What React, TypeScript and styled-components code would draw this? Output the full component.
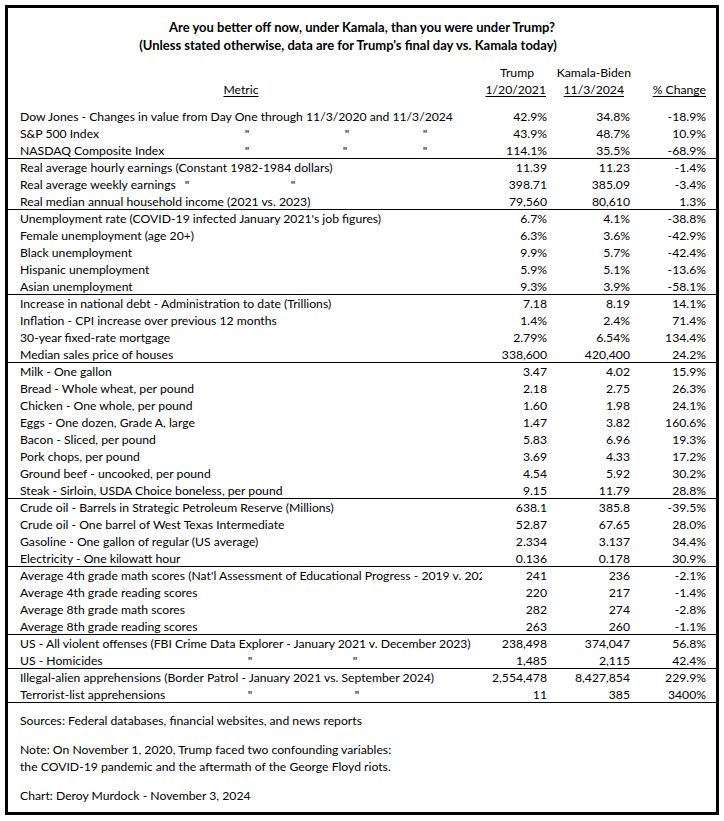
import React from "react";
import styled, { createGlobalStyle } from "styled-components";

const GlobalStyle = createGlobalStyle`
  html, body { margin: 0; padding: 0; background: #ffffff; }
  body { font-family: Lato, "Open Sans", Arial, sans-serif; color: #000; }
`;

const Frame = styled.div`
  box-sizing: border-box;
  margin: 5px;
  width: 714px;
  height: 810px;
  border: 3px solid #000;
  background: #fff;
  overflow: hidden;
  font-size: 12.2px;
  color: #000;
`;

const Title = styled.div`
  padding-top: 10px;
  text-align: center;
  font-weight: 700;
  font-size: 13px;
  line-height: 18px;
`;

const TitleLine = styled.div<{ $shift?: number }>`
  padding-right: ${(p) => (p.$shift ? `${p.$shift}px` : "0")};
`;

const Grid = styled.div`
  display: grid;
  grid-template-columns: 474px 69px 83px 82px;
`;

const HeadGrid = styled(Grid)`
  margin-top: 10px;
  margin-bottom: 10px;
`;

const HeadCell = styled.div<{ $pr: number; $align?: string; $u?: boolean }>`
  height: 17px;
  line-height: 17px;
  text-align: ${(p) => p.$align || "right"};
  padding-right: ${(p) => p.$pr}px;
  text-decoration: ${(p) => (p.$u ? "underline" : "none")};
  text-underline-offset: 2px;
  white-space: nowrap;
`;

const Row = styled(Grid)<{ $last?: boolean }>`
  box-sizing: border-box;
  height: 17px;
  line-height: 17px;
  border-bottom: ${(p) => (p.$last ? "1px solid #000" : "0")};
`;

const MetricCell = styled.div<{ $cols?: string }>`
  padding-left: 12px;
  overflow: hidden;
  white-space: nowrap;
  display: ${(p) => (p.$cols ? "grid" : "block")};
  grid-template-columns: ${(p) => p.$cols || "none"};
`;

const Ditto = styled.span`
  text-align: center;
`;

const Value = styled.div<{ $pr: number }>`
  text-align: right;
  padding-right: ${(p) => p.$pr}px;
  white-space: nowrap;
`;

const Footer = styled.div`
  padding: 9px 0 0 12px;
  line-height: 17px;
`;

const Para = styled.p<{ $gap: number }>`
  margin: ${(p) => p.$gap}px 0 0 0;
`;

type R = { m: string; t: string; k: string; c: string; d?: number[] };

const groups: R[][] = [
  [
    { m: "Dow Jones - Changes in value from Day One through 11/3/2020 and 11/3/2024", t: "42.9%", k: "34.8%", c: "-18.9%" },
    { m: "S&P 500 Index", t: "43.9%", k: "48.7%", c: "10.9%", d: [247, 347, 425] },
    { m: "NASDAQ Composite Index", t: "114.1%", k: "35.5%", c: "-68.9%", d: [247, 345, 425] },
  ],
  [
    { m: "Real average hourly earnings (Constant 1982-1984 dollars)", t: "11.39", k: "11.23", c: "-1.4%" },
    { m: "Real average weekly earnings", t: "398.71", k: "385.09", c: "-3.4%", d: [187, 293] },
    { m: "Real median annual household income (2021 vs. 2023)", t: "79,560", k: "80,610", c: "1.3%" },
  ],
  [
    { m: "Unemployment rate (COVID-19 infected January 2021's job figures)", t: "6.7%", k: "4.1%", c: "-38.8%" },
    { m: "Female unemployment (age 20+)", t: "6.3%", k: "3.6%", c: "-42.9%" },
    { m: "Black unemployment", t: "9.9%", k: "5.7%", c: "-42.4%" },
    { m: "Hispanic unemployment", t: "5.9%", k: "5.1%", c: "-13.6%" },
    { m: "Asian unemployment", t: "9.3%", k: "3.9%", c: "-58.1%" },
  ],
  [
    { m: "Increase in national debt - Administration to date (Trillions)", t: "7.18", k: "8.19", c: "14.1%" },
    { m: "Inflation - CPI increase over previous 12 months", t: "1.4%", k: "2.4%", c: "71.4%" },
    { m: "30-year fixed-rate mortgage", t: "2.79%", k: "6.54%", c: "134.4%" },
    { m: "Median sales price of houses", t: "338,600", k: "420,400", c: "24.2%" },
  ],
  [
    { m: "Milk - One gallon", t: "3.47", k: "4.02", c: "15.9%" },
    { m: "Bread - Whole wheat, per pound", t: "2.18", k: "2.75", c: "26.3%" },
    { m: "Chicken - One whole, per pound", t: "1.60", k: "1.98", c: "24.1%" },
    { m: "Eggs - One dozen, Grade A, large", t: "1.47", k: "3.82", c: "160.6%" },
    { m: "Bacon - Sliced, per pound", t: "5.83", k: "6.96", c: "19.3%" },
    { m: "Pork chops, per pound", t: "3.69", k: "4.33", c: "17.2%" },
    { m: "Ground beef - uncooked, per pound", t: "4.54", k: "5.92", c: "30.2%" },
    { m: "Steak - Sirloin, USDA Choice boneless, per pound", t: "9.15", k: "11.79", c: "28.8%" },
  ],
  [
    { m: "Crude oil - Barrels in Strategic Petroleum Reserve (Millions)", t: "638.1", k: "385.8", c: "-39.5%" },
    { m: "Crude oil - One barrel of West Texas Intermediate", t: "52.87", k: "67.65", c: "28.0%" },
    { m: "Gasoline - One gallon of regular (US average)", t: "2.334", k: "3.137", c: "34.4%" },
    { m: "Electricity - One kilowatt hour", t: "0.136", k: "0.178", c: "30.9%" },
  ],
  [
    { m: "Average 4th grade math scores (Nat'l Assessment of Educational Progress - 2019 v. 2022)", t: "241", k: "236", c: "-2.1%" },
    { m: "Average 4th grade reading scores", t: "220", k: "217", c: "-1.4%" },
    { m: "Average 8th grade math scores", t: "282", k: "274", c: "-2.8%" },
    { m: "Average 8th grade reading scores", t: "263", k: "260", c: "-1.1%" },
  ],
  [
    { m: "US - All violent offenses (FBI Crime Data Explorer - January 2021 v. December 2023)", t: "238,498", k: "374,047", c: "56.8%" },
    { m: "US - Homicides", t: "1,485", k: "2,115", c: "42.4%", d: [250, 355] },
  ],
  [
    { m: "Illegal-alien apprehensions (Border Patrol - January 2021 vs. September 2024)", t: "2,554,478", k: "8,427,854", c: "229.9%" },
    { m: "Terrorist-list apprehensions", t: "11", k: "385", c: "3400%", d: [250, 357] },
  ],
];

// metric content starts at page x = 20; each ditto cell is 20px wide, centred on the given x
function dittoCols(d: number[]): string {
  const cols: string[] = [];
  let prev = 20;
  d.forEach((x) => {
    cols.push(`${x - 10 - prev}px`);
    cols.push("20px");
    prev = x + 10;
  });
  return cols.join(" ");
}

function Metric({ r }: { r: R }) {
  if (!r.d) return <MetricCell>{r.m}</MetricCell>;
  const items: React.ReactNode[] = [];
  r.d.forEach((_, i) => {
    items.push(i === 0 ? <span key={`l${i}`}>{r.m}</span> : <span key={`s${i}`} />);
    items.push(<Ditto key={`d${i}`}>"</Ditto>);
  });
  return <MetricCell $cols={dittoCols(r.d)}>{items}</MetricCell>;
}

export default function App() {
  return (
    <>
      <GlobalStyle />
      <Frame>
        <Title>
          <TitleLine>Are you better off now, under Kamala, than you were under Trump?</TitleLine>
          <TitleLine $shift={28}>(Unless stated otherwise, data are for Trump's final day vs. Kamala today)</TitleLine>
        </Title>
        <HeadGrid>
          <HeadCell $pr={0} />
          <HeadCell $pr={17}>Trump</HeadCell>
          <HeadCell $pr={3}>Kamala-Biden</HeadCell>
          <HeadCell $pr={10} />
          <HeadCell $pr={8} $align="center" $u>Metric</HeadCell>
          <HeadCell $pr={5} $u>1/20/2021</HeadCell>
          <HeadCell $pr={10} $u>11/3/2024</HeadCell>
          <HeadCell $pr={10} $u>% Change</HeadCell>
        </HeadGrid>
        {groups.map((g, gi) =>
          g.map((r, ri) => (
            <Row key={`${gi}-${ri}`} $last={ri === g.length - 1}>
              <Metric r={r} />
              <Value $pr={4}>{r.t}</Value>
              <Value $pr={4}>{r.k}</Value>
              <Value $pr={10}>{r.c}</Value>
            </Row>
          ))
        )}
        <Footer>
          <Para $gap={0}>Sources: Federal databases, financial websites, and news reports</Para>
          <Para $gap={12}>
            Note: On November 1, 2020, Trump faced two confounding variables:
            <br />
            the COVID-19 pandemic and the aftermath of the George Floyd riots.
          </Para>
          <Para $gap={12}>Chart: Deroy Murdock - November 3, 2024</Para>
        </Footer>
      </Frame>
    </>
  );
}
